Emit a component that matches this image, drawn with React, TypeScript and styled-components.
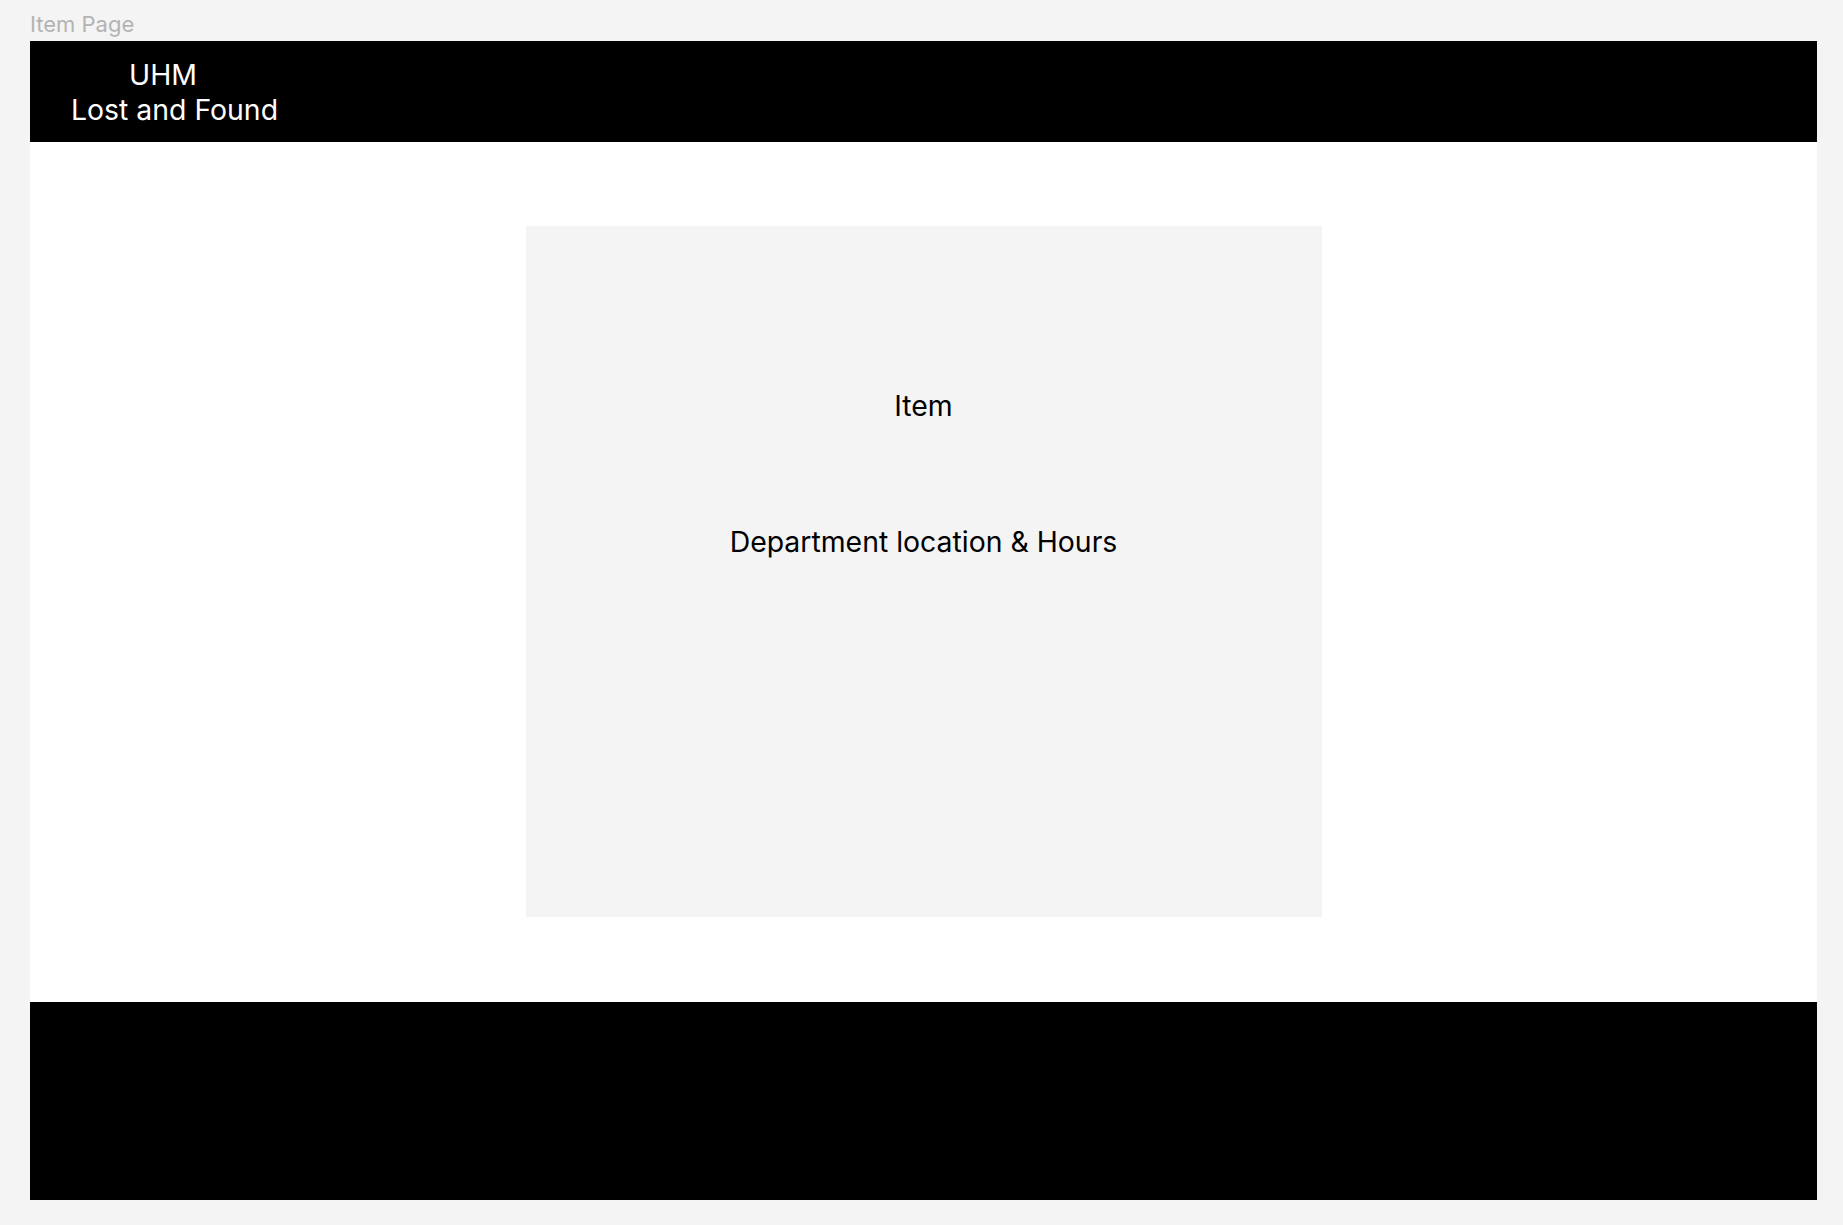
import React from "react";
import styled, { createGlobalStyle } from "styled-components";

const GlobalStyle = createGlobalStyle`
  html, body {
    margin: 0;
    padding: 0;
    background: #f4f4f4;
    font-family: Inter, "Noto Sans", sans-serif;
  }
  * { box-sizing: border-box; }
`;

const Canvas = styled.div`
  min-height: 1225px;
  padding: 11px 27px 0 30px;
  display: flex;
  flex-direction: column;
`;

const FrameLabel = styled.div`
  font-size: 22px;
  line-height: normal;
  color: #b3b3b3;
  margin-bottom: 4px;
`;

const Frame = styled.div`
  width: 1787px;
  background: #ffffff;
  display: flex;
  flex-direction: column;
`;

const Header = styled.header`
  height: 101px;
  background: #000000;
  display: flex;
  align-items: center;
  padding-left: 41px;
  padding-top: 1px;
`;

const Brand = styled.div`
  color: #ffffff;
  font-size: 28.4px;
  line-height: normal;
  display: flex;
  flex-direction: column;
`;

const BrandLine = styled.span<{ $indent?: number }>`
  padding-left: ${(p) => p.$indent ?? 0}px;
`;

const Main = styled.main`
  height: 860px;
  display: flex;
  align-items: center;
  justify-content: center;
  padding-bottom: 1px;
`;

const Card = styled.section`
  width: 796px;
  height: 691px;
  background: #f4f4f4;
  display: flex;
  flex-direction: column;
  align-items: center;
  padding-top: 162px;
  gap: 101px;
`;

const CardText = styled.div`
  font-size: 28.4px;
  line-height: normal;
  color: #000000;
`;

const Footer = styled.footer`
  height: 198px;
  background: #000000;
`;

export default function App() {
  return (
    <>
      <GlobalStyle />
      <Canvas>
        <FrameLabel>Item Page</FrameLabel>
        <Frame>
          <Header>
            <Brand>
              <BrandLine $indent={58}>UHM</BrandLine>
              <BrandLine>Lost and Found</BrandLine>
            </Brand>
          </Header>
          <Main>
            <Card>
              <CardText>Item</CardText>
              <CardText>Department location &amp; Hours</CardText>
            </Card>
          </Main>
          <Footer />
        </Frame>
      </Canvas>
    </>
  );
}
